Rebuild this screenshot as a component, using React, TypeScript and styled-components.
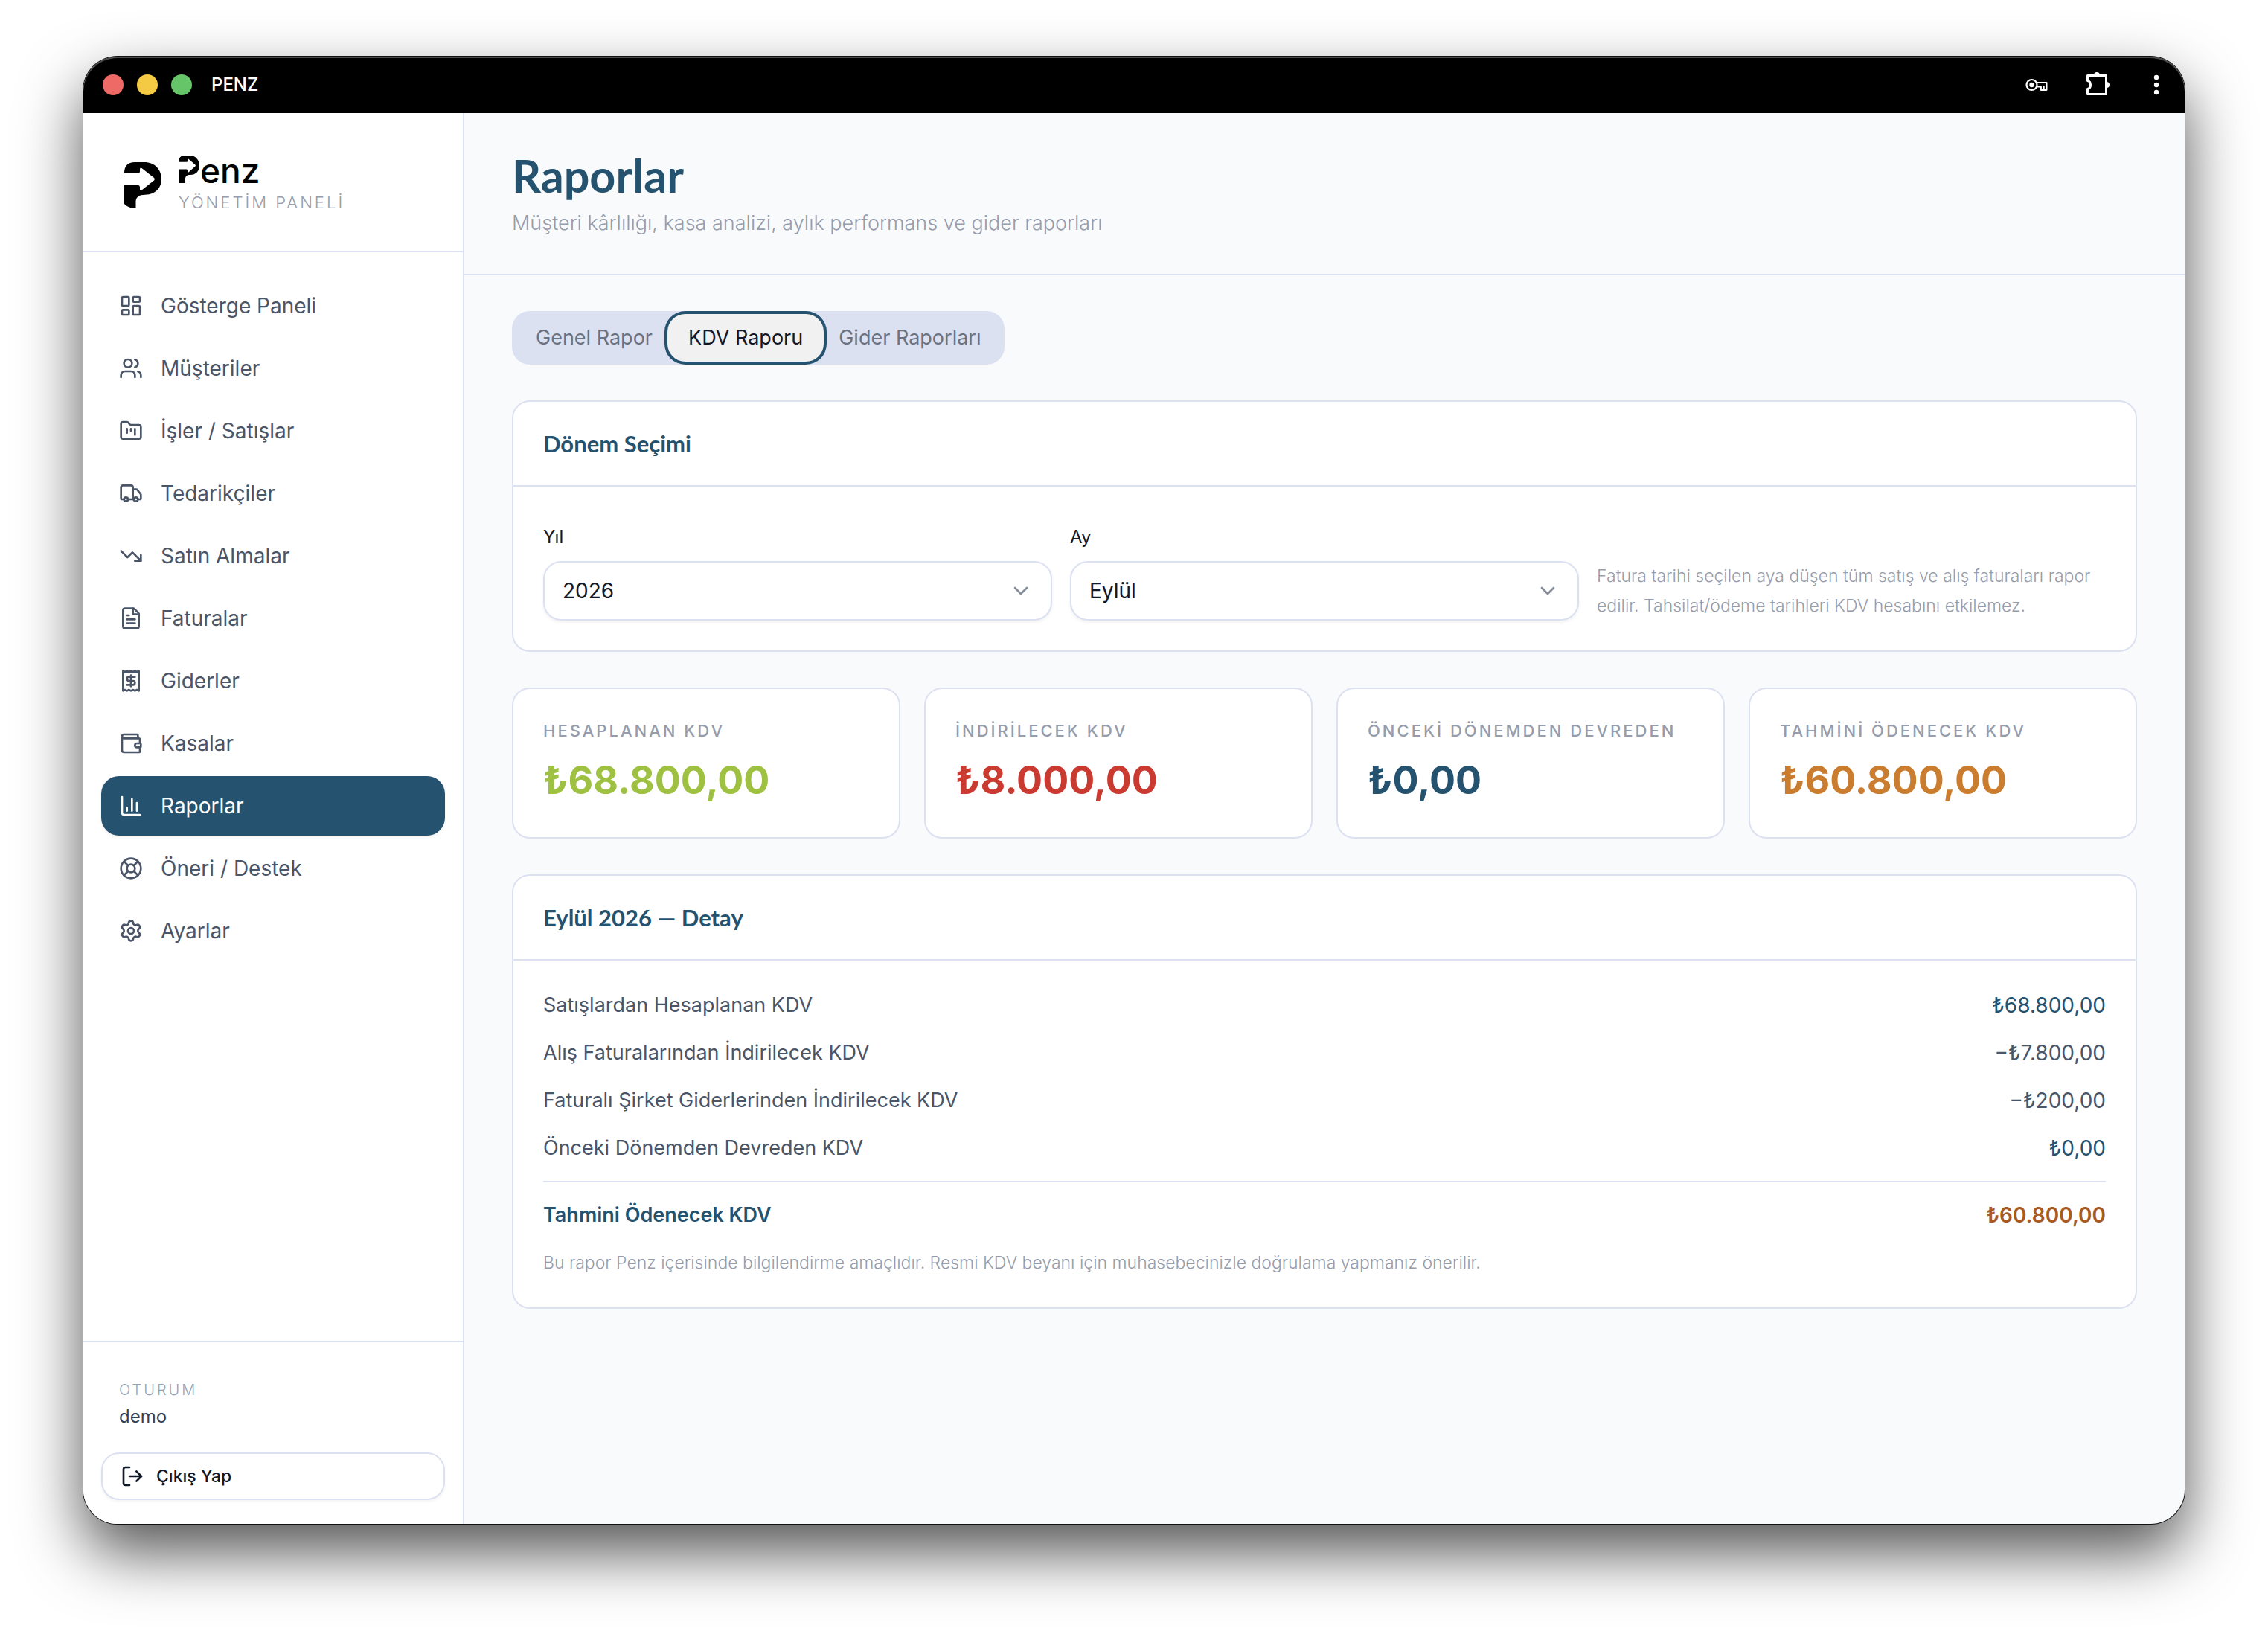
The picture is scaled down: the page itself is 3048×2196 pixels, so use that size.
import React, { useState } from "react";
import styled, { createGlobalStyle, css } from "styled-components";
import {
  ChartColumn,
  ChevronDown,
  FileText,
  FolderKanban,
  LayoutDashboard,
  LifeBuoy,
  LogOut,
  Settings,
  TrendingDown,
  Truck,
  Users,
} from "lucide-react";

const color = {
  primary: "#24526f",
  ink: "#111827",
  text: "#4a5568",
  muted: "#959cab",
  line: "#dce1f2",
  page: "#f9fafc",
  green: "#9fc141",
  red: "#cb3a31",
  orange: "#cb7d2f",
  rust: "#a85a22",
};

const body = `Inter, "Noto Sans", "Liberation Sans", sans-serif`;
const display = `Lato, Inter, "Noto Sans", sans-serif`;

const GlobalStyle = createGlobalStyle`
  *, *::before, *::after { box-sizing: border-box; }
  body { margin: 0; background: #fff; font-family: ${body}; color: ${color.ink}; }
  h1, h2, p, dl, dd, dt, ul { margin: 0; padding: 0; }
  button, select { font-family: inherit; }
`;

/* ---------- Window frame ---------- */

const Desktop = styled.div`
  display: flex;
  min-height: 100vh;
  padding: 76px 112px 148px;
`;

const Window = styled.div`
  display: flex;
  flex: 1;
  flex-direction: column;
  min-width: 0;
  overflow: hidden;
  border-radius: 46px;
  background: ${color.page};
  box-shadow: 0 0 0 1px #111, 0 38px 84px rgba(0, 0, 0, 0.68);
`;

const TitleBar = styled.header`
  display: flex;
  align-items: center;
  height: 76px;
  padding: 0 28px 0 26px;
  background: #000;
  color: #fff;
  border-radius: 46px 46px 0 0;
  box-shadow: inset 0 2px 0 #4a4a4a;
`;

const Lights = styled.div`
  display: flex;
  gap: 18px;
  margin-right: 26px;
`;

const Light = styled.span<{ $fill: string }>`
  width: 28px;
  height: 28px;
  border-radius: 50%;
  background: ${(p) => p.$fill};
`;

const AppName = styled.span`
  flex: 1;
  font-size: 24px;
  font-weight: 500;
  line-height: 32px;
`;

const BarButton = styled.button`
  display: flex;
  padding: 0;
  margin-left: 52px;
  border: 0;
  background: none;
  color: inherit;
`;

const Shell = styled.div`
  display: flex;
  flex: 1;
`;

/* ---------- Sidebar ---------- */

const Sidebar = styled.aside`
  display: flex;
  flex: 0 0 512px;
  flex-direction: column;
  border-right: 2px solid ${color.line};
  background: #fff;
`;

const Brand = styled.div`
  display: flex;
  align-items: center;
  gap: 23px;
  padding: 57px 48px 49px 55px;
  border-bottom: 2px solid ${color.line};
`;

const BrandText = styled.div`
  display: flex;
  flex-direction: column;
  gap: 10px;
`;

const Wordmark = styled.div`
  display: flex;
  align-items: baseline;
  gap: 1px;
  height: 37px;
  font-size: 46px;
  font-weight: 500;
  line-height: 32px;
  color: #000;
`;

const BrandNote = styled.p`
  font-size: 22px;
  font-weight: 300;
  line-height: 32px;
  letter-spacing: 3px;
  color: ${color.muted};
`;

const Nav = styled.nav`
  display: flex;
  flex: 1;
  flex-direction: column;
  gap: 4px;
  padding: 32px 24px;
`;

const NavLink = styled.a<{ $active?: boolean }>`
  display: flex;
  align-items: center;
  gap: 24px;
  height: 80px;
  padding: 0 24px;
  border-radius: 24px;
  font-size: 28px;
  line-height: 40px;
  text-decoration: none;
  color: ${color.text};
  ${(p) =>
    p.$active &&
    css`
      background: ${color.primary};
      color: #fff;
      box-shadow: 0 2px 4px rgba(0, 0, 0, 0.06);
    `}
`;

const Session = styled.div`
  padding: 48px 24px 32px;
  border-top: 2px solid ${color.line};
`;

const SessionLabel = styled.p`
  padding: 0 24px;
  font-size: 20px;
  font-weight: 300;
  line-height: 32px;
  letter-spacing: 3px;
  color: #94a3b8;
`;

const SessionUser = styled.p`
  padding: 0 24px;
  margin-bottom: 28px;
  font-size: 24px;
  line-height: 40px;
  color: #334155;
`;

const LogoutButton = styled.button`
  display: flex;
  align-items: center;
  gap: 16px;
  width: 100%;
  height: 64px;
  padding: 0 24px;
  border: 2px solid ${color.line};
  border-radius: 24px;
  background: #fff;
  box-shadow: 0 2px 4px rgba(0, 0, 0, 0.05);
  font-size: 23px;
  font-weight: 500;
  line-height: 32px;
  color: ${color.ink};
`;

/* ---------- Main column ---------- */

const Main = styled.main`
  flex: 1;
  min-width: 0;
`;

const PageHeader = styled.div`
  display: flex;
  flex-direction: column;
  gap: 8px;
  padding: 48px 64px;
  border-bottom: 2px solid ${color.line};
`;

const PageTitle = styled.h1`
  font-family: ${display};
  font-size: 61px;
  font-weight: 700;
  line-height: 72px;
  color: ${color.primary};
`;

const PageNote = styled.p`
  font-size: 27px;
  font-weight: 300;
  line-height: 40px;
  color: ${color.muted};
`;

const Content = styled.div`
  display: flex;
  flex-direction: column;
  gap: 48px;
  padding: 48px 64px;
`;

const Tabs = styled.div`
  display: flex;
  align-self: flex-start;
  padding: 8px;
  border-radius: 24px;
  background: ${color.line};
`;

const Tab = styled.button<{ $active: boolean }>`
  height: 56px;
  padding: 0 24px;
  border: 0;
  border-radius: 20px;
  outline: 0;
  background: none;
  font-size: 27px;
  line-height: 40px;
  color: #6b7280;
  ${(p) =>
    p.$active &&
    css`
      z-index: 1;
      background: #f1f1f1;
      color: ${color.ink};
      box-shadow: 0 0 0 4px #f1f1f1, 0 0 0 8px ${color.primary};
    `}
`;

const Card = styled.section`
  border: 2px solid ${color.line};
  border-radius: 24px;
  background: #fff;
`;

const CardHeader = styled.div`
  padding: 36px 40px;
  border-bottom: 2px solid ${color.line};
`;

const CardTitle = styled.h2`
  font-family: ${display};
  font-size: 31px;
  font-weight: 700;
  line-height: 40px;
  color: ${color.primary};
`;

const PeriodForm = styled.form`
  display: grid;
  grid-template-columns: repeat(3, 1fr);
  align-items: end;
  gap: 24px;
  padding: 48px 40px 40px;
`;

const Field = styled.div`
  display: flex;
  flex-direction: column;
  gap: 12px;
`;

const FieldLabel = styled.label`
  font-size: 24px;
  line-height: 40px;
`;

const SelectBox = styled.div`
  display: grid;
  align-items: center;
  color: #858c9a;

  > * {
    grid-area: 1 / 1;
  }

  > svg {
    justify-self: end;
    margin-right: 26px;
    pointer-events: none;
  }
`;

const Select = styled.select`
  width: 100%;
  height: 80px;
  padding: 0 24px;
  border: 2px solid ${color.line};
  border-radius: 24px;
  appearance: none;
  background: #fff;
  box-shadow: 0 2px 4px rgba(0, 0, 0, 0.06);
  font-size: 28px;
  color: ${color.ink};
`;

const Hint = styled.p`
  font-size: 23px;
  font-weight: 300;
  line-height: 40px;
  color: ${color.muted};
`;

const Stats = styled.div`
  display: grid;
  grid-template-columns: repeat(4, 1fr);
  gap: 32px;
`;

const Stat = styled(Card)`
  display: flex;
  flex-direction: column;
  gap: 15px;
  padding: 40px;
`;

const StatLabel = styled.p`
  font-size: 22px;
  font-weight: 500;
  line-height: 32px;
  letter-spacing: 3px;
  white-space: nowrap;
  color: ${color.muted};
`;

const StatValue = styled.p<{ $tone: string }>`
  font-size: 52px;
  font-weight: 700;
  line-height: 72px;
  color: ${(p) => p.$tone};
`;

const Detail = styled.div`
  display: flex;
  flex-direction: column;
  gap: 24px;
  padding: 40px;
`;

const DetailList = styled.dl`
  display: flex;
  flex-direction: column;
  gap: 24px;
`;

const DetailRow = styled.div<{ $total?: boolean }>`
  display: flex;
  justify-content: space-between;
  font-size: 27px;
  line-height: 40px;
  color: ${color.text};
  ${(p) =>
    p.$total &&
    css`
      padding-top: 24px;
      border-top: 2px solid ${color.line};
      font-weight: 600;
      color: ${color.primary};
    `}
`;

const Amount = styled.dd<{ $tone: string }>`
  font-size: 28px;
  color: ${(p) => p.$tone};
`;

/* ---------- Drawings ---------- */

const markPath =
  "M0 14.7C0 5 5 0 14 0H27C41 0 50 10 50 22.5C50 35 41 43.7 28 43.7C20 43.7 15.5 47 15.5 53V62C9 62 4 60 0 56V31H19Q21 31 21 33.5V37Q21.5 39 23.5 37.5L40 24.5Q41.5 22.7 40 21L23.5 8Q21.5 6.5 21 9V12.5Q21 14.7 19 14.7Z";
const wordPath =
  "M0 8.8C0 3 3 0 8 0H15C23 0 28 6 28 13.4C28 21 23 26 15.6 26C11 26 9 28 9 31.5V37H0V18.5H11Q12 18.5 12 20V22Q12.3 23.2 13.4 22.4L22.4 14.6Q23.4 13.5 22.4 12.5L13.4 4.8Q12.3 4 12 5.4V7.4Q12 8.8 11 8.8Z";

const Mark = () => (
  <svg width="50" height="62" viewBox="0 0 50 62" fill="#000" aria-hidden="true">
    <path d={markPath} />
  </svg>
);

const WordmarkP = () => (
  <svg width="28" height="37" viewBox="0 0 28 37" fill="#000" role="img" aria-label="P">
    <path d={wordPath} />
  </svg>
);

const KeyIcon = () => (
  <svg width="30" height="18" viewBox="0 0 30 18" fill="none" stroke="#fff" strokeWidth="2.2" strokeLinejoin="round">
    <circle cx="8.500" cy="9" r="7" />
    <circle cx="8.500" cy="9" r="3.200" fill="#fff" stroke="none" />
    <path d="M14.8 6H28.4V15.8H20.8V11.400H14.8M24.6 15.8V11" />
  </svg>
);

const ExtensionsIcon = () => (
  <svg width="32" height="36" viewBox="0 0 32 36" fill="none" stroke="#fff" strokeWidth="3" strokeLinejoin="round">
    <path d="M1.5 13V5.5H26.5V30.5H1.5V23C4 22.600 6 20.600 6 18S4 13.400 1.5 13Z" stroke="none" />
    <path d="M1.5 12.5V5.5H26.5V30.5H1.5V23.5C4 23 5.500 20.800 5.500 18S4 13 1.500 12.500Z" />
    <path d="M10 5a4 4 0 0 1 8 0ZM27 14a4 4 0 0 1 0 8Z" fill="#fff" stroke="none" />
  </svg>
);

const MenuIcon = () => (
  <svg width="20" height="28" viewBox="0 0 20 28" fill="#fff">
    <circle cx="10" cy="4" r="3.200" />
    <circle cx="10" cy="14" r="3.200" />
    <circle cx="10" cy="24" r="3.200" />
  </svg>
);

const iconFrame = {
  width: 32,
  height: 32,
  viewBox: "0 0 24 24",
  fill: "none",
  stroke: "currentColor",
  strokeWidth: 2,
  strokeLinecap: "round" as const,
  strokeLinejoin: "round" as const,
};

const ReceiptIcon = () => (
  <svg {...iconFrame}>
    <path d="M4 2v20l2-1 2 1 2-1 2 1 2-1 2 1 2-1 2 1V2l-2 1-2-1-2 1-2-1-2 1-2-1-2 1Z" />
    <path d="M16 8h-6a2 2 0 1 0 0 4h4a2 2 0 1 1 0 4H8" />
    <path d="M12 17.500v-11" />
  </svg>
);

const WalletIcon = () => (
  <svg {...iconFrame}>
    <path d="M19 7V4a1 1 0 0 0-1-1H5a2 2 0 0 0 0 4h15a1 1 0 0 1 1 1v4h-3a2 2 0 0 0 0 4h3a1 1 0 0 0 1-1v-2a1 1 0 0 0-1-1" />
    <path d="M3 5v14a2 2 0 0 0 2 2h15a1 1 0 0 0 1-1v-4" />
  </svg>
);

/* ---------- Data ---------- */

const navItems = [
  { label: "Gösterge Paneli", icon: LayoutDashboard },
  { label: "Müşteriler", icon: Users },
  { label: "İşler / Satışlar", icon: FolderKanban },
  { label: "Tedarikçiler", icon: Truck },
  { label: "Satın Almalar", icon: TrendingDown },
  { label: "Faturalar", icon: FileText },
  { label: "Giderler", icon: ReceiptIcon },
  { label: "Kasalar", icon: WalletIcon },
  { label: "Raporlar", icon: ChartColumn },
  { label: "Öneri / Destek", icon: LifeBuoy },
  { label: "Ayarlar", icon: Settings },
];

const tabs = ["Genel Rapor", "KDV Raporu", "Gider Raporları"];

const stats = [
  { label: "HESAPLANAN KDV", value: "₺68.800,00", tone: color.green },
  { label: "İNDİRİLECEK KDV", value: "₺8.000,00", tone: color.red },
  { label: "ÖNCEKİ DÖNEMDEN DEVREDEN", value: "₺0,00", tone: color.primary },
  { label: "TAHMİNİ ÖDENECEK KDV", value: "₺60.800,00", tone: color.orange },
];

const details = [
  { label: "Satışlardan Hesaplanan KDV", value: "₺68.800,00", tone: color.primary },
  { label: "Alış Faturalarından İndirilecek KDV", value: "−₺7.800,00", tone: color.text },
  { label: "Faturalı Şirket Giderlerinden İndirilecek KDV", value: "−₺200,00", tone: color.text },
  { label: "Önceki Dönemden Devreden KDV", value: "₺0,00", tone: color.primary },
  { label: "Tahmini Ödenecek KDV", value: "₺60.800,00", tone: color.rust, total: true },
];

export default function App() {
  const [tab, setTab] = useState("KDV Raporu");

  return (
    <>
      <GlobalStyle />
      <Desktop>
        <Window>
          <TitleBar>
            <Lights>
              <Light $fill="#ee6a66" />
              <Light $fill="#f4c944" />
              <Light $fill="#66c568" />
            </Lights>
            <AppName>PENZ</AppName>
            <BarButton aria-label="Şifreler">
              <KeyIcon />
            </BarButton>
            <BarButton aria-label="Uzantılar">
              <ExtensionsIcon />
            </BarButton>
            <BarButton aria-label="Menü">
              <MenuIcon />
            </BarButton>
          </TitleBar>

          <Shell>
            <Sidebar>
              <Brand>
                <Mark />
                <BrandText>
                  <Wordmark>
                    <WordmarkP />
                    <span>enz</span>
                  </Wordmark>
                  <BrandNote>YÖNETİM PANELİ</BrandNote>
                </BrandText>
              </Brand>

              <Nav>
                {navItems.map(({ label, icon: Icon }) => (
                  <NavLink key={label} href="#" $active={label === "Raporlar"}>
                    <Icon size={32} />
                    {label}
                  </NavLink>
                ))}
              </Nav>

              <Session>
                <SessionLabel>OTURUM</SessionLabel>
                <SessionUser>demo</SessionUser>
                <LogoutButton type="button">
                  <LogOut size={32} />
                  Çıkış Yap
                </LogoutButton>
              </Session>
            </Sidebar>

            <Main>
              <PageHeader>
                <PageTitle>Raporlar</PageTitle>
                <PageNote>Müşteri kârlılığı, kasa analizi, aylık performans ve gider raporları</PageNote>
              </PageHeader>

              <Content>
                <Tabs role="tablist">
                  {tabs.map((name) => (
                    <Tab
                      key={name}
                      type="button"
                      role="tab"
                      aria-selected={name === tab}
                      $active={name === tab}
                      onClick={() => setTab(name)}
                    >
                      {name}
                    </Tab>
                  ))}
                </Tabs>

                <Card>
                  <CardHeader>
                    <CardTitle>Dönem Seçimi</CardTitle>
                  </CardHeader>
                  <PeriodForm>
                    <Field>
                      <FieldLabel htmlFor="year">Yıl</FieldLabel>
                      <SelectBox>
                        <Select id="year" defaultValue="2026">
                          <option>2026</option>
                        </Select>
                        <ChevronDown size={32} />
                      </SelectBox>
                    </Field>
                    <Field>
                      <FieldLabel htmlFor="month">Ay</FieldLabel>
                      <SelectBox>
                        <Select id="month" defaultValue="Eylül">
                          <option>Eylül</option>
                        </Select>
                        <ChevronDown size={32} />
                      </SelectBox>
                    </Field>
                    <Hint>
                      Fatura tarihi seçilen aya düşen tüm satış ve alış faturaları rapor edilir. Tahsilat/ödeme tarihleri
                      KDV hesabını etkilemez.
                    </Hint>
                  </PeriodForm>
                </Card>

                <Stats>
                  {stats.map((s) => (
                    <Stat key={s.label}>
                      <StatLabel>{s.label}</StatLabel>
                      <StatValue $tone={s.tone}>{s.value}</StatValue>
                    </Stat>
                  ))}
                </Stats>

                <Card>
                  <CardHeader>
                    <CardTitle>Eylül 2026 — Detay</CardTitle>
                  </CardHeader>
                  <Detail>
                    <DetailList>
                      {details.map((d) => (
                        <DetailRow key={d.label} $total={d.total}>
                          <dt>{d.label}</dt>
                          <Amount $tone={d.tone}>{d.value}</Amount>
                        </DetailRow>
                      ))}
                    </DetailList>
                    <Hint>
                      Bu rapor Penz içerisinde bilgilendirme amaçlıdır. Resmi KDV beyanı için muhasebecinizle doğrulama
                      yapmanız önerilir.
                    </Hint>
                  </Detail>
                </Card>
              </Content>
            </Main>
          </Shell>
        </Window>
      </Desktop>
    </>
  );
}
